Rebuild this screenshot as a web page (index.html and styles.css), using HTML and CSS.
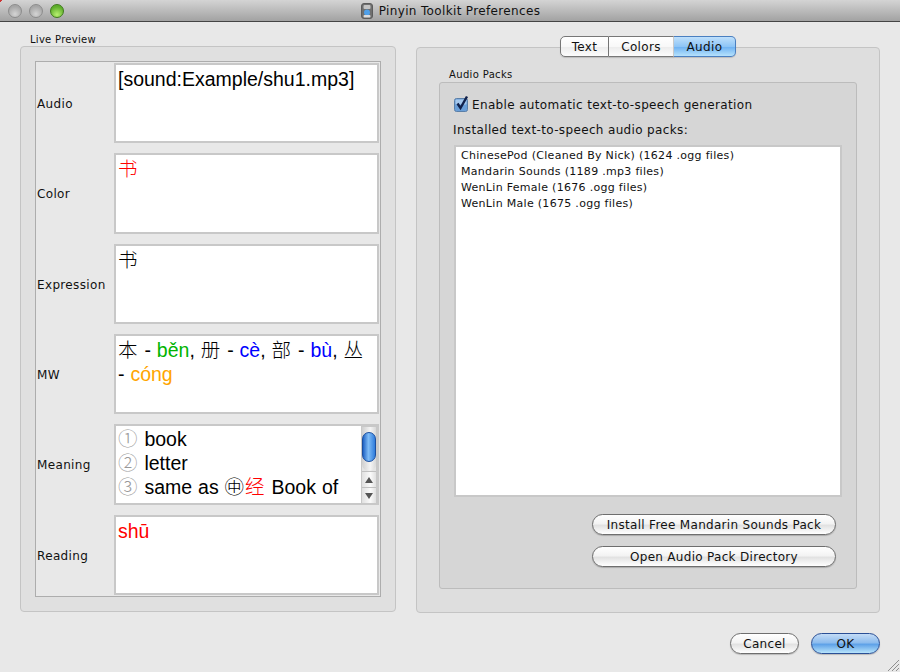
FILE: index.html
```html
<!DOCTYPE html>
<html lang="en">
<head>
  <meta charset="UTF-8">
  <title>Pinyin Toolkit Preferences</title>
  <link rel="stylesheet" href="styles.css">
</head>
<body>
  <div class="titlebar">
    <div class="lights">
      <span class="light"></span>
      <span class="light"></span>
      <span class="light light-green"></span>
    </div>
    <div class="title">
      <svg class="title-icon" width="12" height="16" viewBox="0 0 12 16">
        <rect x="0.5" y="0.5" width="11" height="15" rx="2.5" fill="#6f6f6f" stroke="#5c5c5c"/>
        <rect x="2.5" y="2" width="7" height="4" rx="1" fill="#c4c4c4"/>
        <circle cx="6" cy="9.5" r="3" fill="#4f9fe8"/>
        <rect x="2.5" y="12" width="7" height="2.5" rx="1" fill="#dcdcdc"/>
      </svg>
      <span>Pinyin Toolkit Preferences</span>
    </div>
  </div>

  <div class="window">
    <div class="columns">
      <section class="left">
        <div class="group-title">Live Preview</div>
        <div class="group">
          <div class="preview">
            <div class="row">
              <label>Audio</label>
              <div class="field">[sound:Example/shu1.mp3]</div>
            </div>
            <div class="row tall">
              <label>Color</label>
              <div class="field"><span class="red hz">书</span></div>
            </div>
            <div class="row">
              <label>Expression</label>
              <div class="field"><span class="hz">书</span></div>
            </div>
            <div class="row">
              <label>MW</label>
              <div class="field"><span class="hz">本</span> - <span class="green">běn</span>, <span class="hz">册</span> - <span class="blue">cè</span>, <span class="hz">部</span> - <span class="blue">bù</span>, <span class="hz">丛</span> - <span class="orange">cóng</span></div>
            </div>
            <div class="row tall">
              <label>Meaning</label>
              <div class="field field-scroll">
                <div class="meaning">
                  <div><span class="num hz">①</span> book</div>
                  <div><span class="num hz">②</span> letter</div>
                  <div><span class="num hz">③</span> same as <span class="hz">㊥</span><span class="red hz">经</span> Book of</div>
                </div>
                <div class="scrollbar">
                  <div class="scroll-track"><div class="scroll-thumb"></div></div>
                  <div class="scroll-btn"><span class="arrow-up"></span></div>
                  <div class="scroll-btn"><span class="arrow-down"></span></div>
                </div>
              </div>
            </div>
            <div class="row">
              <label>Reading</label>
              <div class="field"><span class="red">shū</span></div>
            </div>
          </div>
        </div>
      </section>

      <section class="right">
        <div class="tabs">
          <div class="tab tab-text">Text</div>
          <div class="tab tab-colors">Colors</div>
          <div class="tab tab-audio">Audio</div>
        </div>
        <div class="panel">
          <div class="group-title">Audio Packs</div>
          <div class="packs">
            <div class="check-line">
              <svg class="check" width="16" height="17" viewBox="0 0 16 17">
                <rect x="0.5" y="3.5" width="13" height="13" rx="2" fill="#6a9fd8" stroke="#5a7fa8"/>
                <rect x="1.5" y="4.5" width="11" height="5" rx="1" fill="#a5c8ec"/>
                <path d="M3.5 8.5 L6.5 13 L13 1.5" fill="none" stroke="#10204a" stroke-width="2.4"/>
              </svg>
              <span>Enable automatic text-to-speech generation</span>
            </div>
            <div class="installed">Installed text-to-speech audio packs:</div>
            <div class="list">
              <div>ChinesePod (Cleaned By Nick) (1624 .ogg files)</div>
              <div>Mandarin Sounds (1189 .mp3 files)</div>
              <div>WenLin Female (1676 .ogg files)</div>
              <div>WenLin Male (1675 .ogg files)</div>
            </div>
            <div class="pack-buttons">
              <button class="btn wide">Install Free Mandarin Sounds Pack</button>
              <button class="btn wide">Open Audio Pack Directory</button>
            </div>
          </div>
        </div>
      </section>
    </div>

    <div class="footer">
      <button class="btn small">Cancel</button>
      <button class="btn small btn-ok">OK</button>
    </div>
  </div>

  <svg class="grip" width="14" height="14" viewBox="0 0 14 14">
    <path d="M13 2 L2 13 M13 6 L6 13 M13 10 L10 13" stroke="#8f8f8f" stroke-width="1" fill="none"/>
  </svg>
</body>
</html>
```

FILE: styles.css
```css
* {
  margin: 0;
  padding: 0;
  box-sizing: border-box;
}

html, body {
  height: 100%;
  overflow: hidden;
}

body {
  background-color: #e8e8e8;
  color: #111;
  font-family: "DejaVu Sans", sans-serif;
  font-size: 12px;
  letter-spacing: 0.35px;
  position: relative;
}

.titlebar {
  height: 22px;
  background: linear-gradient(135deg, #c33 2px, transparent 2px), linear-gradient(#d4d4d4, #a2a2a2);
  border-bottom: 1px solid #444;
  position: relative;
  display: flex;
  justify-content: center;
  align-items: center;
}

.lights {
  position: absolute;
  left: 8px;
  top: 4px;
  display: flex;
  gap: 7px;
}

.light {
  width: 14px;
  height: 14px;
  border-radius: 50%;
  border: 1px solid #8c8c8c;
  background: radial-gradient(circle at 50% 75%, #d4d4d4, #a6a6a6 70%);
}

.light-green {
  border-color: #3f7a1c;
  background: radial-gradient(circle at 50% 80%, #b8f070, #5fae2c 70%);
}

.title {
  display: flex;
  align-items: center;
  gap: 6px;
  margin-left: 1px;
  color: #111;
}

.window {
  padding: 15px 20px 0;
}

.columns {
  display: flex;
  gap: 20px;
}

.left {
  width: 376px;
}

.right {
  width: 464px;
  position: relative;
  padding-top: 10px;
}

.group-title {
  font-size: 10px;
  line-height: 5px;
  height: 9px;
  padding-left: 10px;
  letter-spacing: 0.28px;
  color: #111;
}

.group {
  background: #e0e0e0;
  border: 1px solid #c4c4c4;
  border-radius: 4px;
  height: 566px;
  padding: 14px;
}

.preview {
  background: #e8e8e8;
  border: 1px solid #adadad;
  height: 536px;
  padding: 1px;
  display: flex;
  flex-direction: column;
  gap: 10px;
}

.row {
  height: 80px;
  display: flex;
  align-items: center;
}

.row.tall {
  height: 81px;
}

.row label {
  width: 77px;
  flex: none;
  margin-top: 2px;
}

.row.tall label {
  margin-top: 0;
}

.field {
  flex: 1;
  height: 100%;
  background: #fff;
  border: 2px solid #c8c8c8;
  padding: 2px 2px 0 2px;
  font-family: "Liberation Sans", "Noto Sans CJK SC", sans-serif;
  font-size: 19.5px;
  letter-spacing: 0;
  word-spacing: 0.5px;
  line-height: 24px;
  color: #000;
  overflow: hidden;
}

.hz {
  font-family: "Noto Sans CJK SC", sans-serif;
  font-weight: 300;
  letter-spacing: 1px;
  line-height: 0;
}

.red { color: #f00; }
.green { color: #00b400; }
.blue { color: #00f; }
.orange { color: #ffa500; }
.num { color: #999; }

.field-scroll {
  display: flex;
  padding-right: 0;
  padding-top: 1px;
  overflow: visible;
}

.meaning {
  flex: 1;
  white-space: nowrap;
}

.scrollbar {
  width: 16px;
  flex: none;
  margin-top: -1px;
  margin-bottom: -1px;
  display: flex;
  flex-direction: column;
  background: #e4e4e4;
  border: 1px solid #c8c8c8;
}

.scroll-track {
  height: 44px;
  background: linear-gradient(90deg, #cfcfcf, #f4f4f4 60%, #d8d8d8);
  border-radius: 0 0 7px 7px;
  padding-top: 5px;
}

.scroll-thumb {
  height: 30px;
  border-radius: 7px;
  border: 1px solid #1b4fa0;
  background: linear-gradient(90deg, #1f62c4, #7fbcf6 45%, #2f7cdc);
}

.scroll-btn {
  flex: 1;
  display: flex;
  align-items: center;
  justify-content: center;
  background: linear-gradient(90deg, #e0e0e0, #fafafa 60%, #e0e0e0);
  border-top: 1px solid #c0c0c0;
}

.arrow-up {
  border: 4px solid transparent;
  border-top: 0;
  border-bottom: 6px solid #555;
}

.arrow-down {
  border: 4px solid transparent;
  border-bottom: 0;
  border-top: 6px solid #555;
}

.tabs {
  position: absolute;
  left: 144px;
  top: -1px;
  display: flex;
  height: 21px;
  z-index: 1;
}

.tab {
  display: flex;
  align-items: center;
  justify-content: center;
  background: linear-gradient(#fff, #f8f8f8 50%, #ececec 52%, #fcfcfc);
  border: 1px solid #777;
  border-left: 0;
  box-shadow: 0 1px 1px rgba(0, 0, 0, 0.15);
}

.tab-text {
  width: 49px;
  border-left: 1px solid #777;
  border-radius: 5px 0 0 5px;
}

.tab-colors {
  width: 65px;
  border-right-color: #ccc;
}

.tab-audio {
  width: 62px;
  border-color: #4a7fc0;
  border-radius: 0 5px 5px 0;
  background: linear-gradient(#bfe0fb, #8ec5f6 50%, #6db1f2 52%, #b6e2fc);
}

.panel {
  background: #dedede;
  border: 1px solid #c4c4c4;
  border-radius: 4px;
  height: 566px;
  padding: 22px 22px 0;
}

.panel .group-title {
  padding-left: 10px;
  line-height: 10px;
  height: 12px;
  letter-spacing: 0.35px;
}

.packs {
  background: #d6d6d6;
  border: 1px solid #bcbcbc;
  border-radius: 3px;
  height: 507px;
  padding: 12px 14px 0;
}

.check-line {
  display: flex;
  align-items: flex-end;
  gap: 2px;
  height: 17px;
}

.installed {
  margin-top: 11px;
  margin-left: -1px;
  line-height: 14px;
}

.list {
  margin-top: 8px;
  width: 388px;
  height: 352px;
  background: #fff;
  border: 2px solid #c8c8c8;
  padding: 1px 5px;
  font-size: 11px;
  letter-spacing: 0.3px;
  line-height: 16px;
}

.pack-buttons {
  display: flex;
  flex-direction: column;
  align-items: flex-end;
  gap: 11px;
  margin-top: 17px;
  margin-right: 6px;
}

.btn {
  font-family: "DejaVu Sans", sans-serif;
  font-size: 12px;
  letter-spacing: 0.3px;
  height: 21px;
  color: #111;
  border: 1px solid #6e6e6e;
  border-radius: 11px;
  background: linear-gradient(#ffffff, #f3f3f3 45%, #e2e2e2 55%, #ffffff);
  box-shadow: 0 1px 1px rgba(0, 0, 0, 0.2);
}

.wide {
  width: 244px;
}

.small {
  width: 69px;
}

.btn-ok {
  border-color: #2a4f96;
  background: linear-gradient(#c4dcf6, #8dbcee 45%, #5fa2e8 55%, #b8e4fb);
}

.footer {
  display: flex;
  justify-content: flex-end;
  gap: 12px;
  margin-top: 20px;
}

.grip {
  position: absolute;
  right: 0;
  bottom: 0;
}
```
